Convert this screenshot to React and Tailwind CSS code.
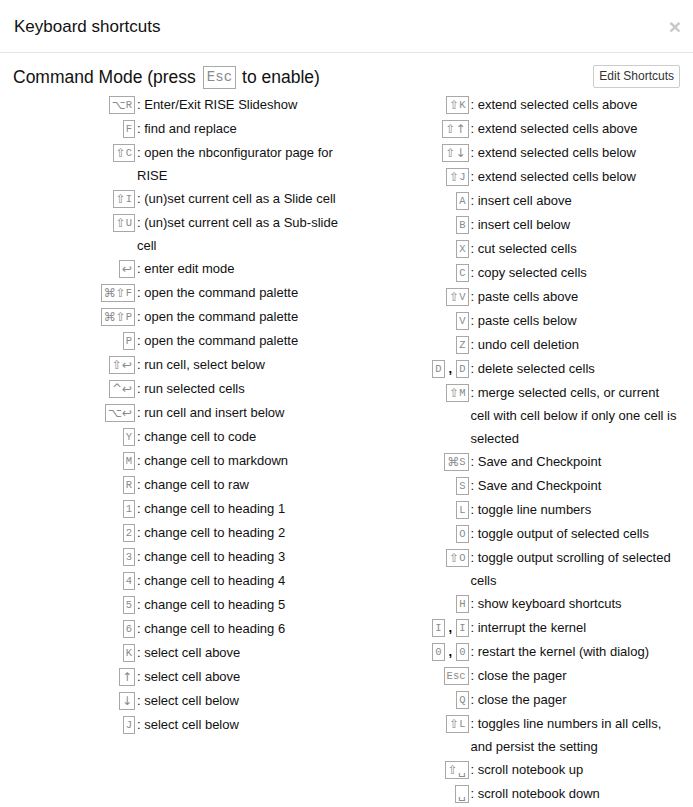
const left = [
  { keys: ['⌥R'], text: ['Enter/Exit RISE Slideshow'] },
  { keys: ['F'], text: ['find and replace'] },
  { keys: ['⇧C'], text: ['open the nbconfigurator page for', 'RISE'] },
  { keys: ['⇧I'], text: ['(un)set current cell as a Slide cell'] },
  { keys: ['⇧U'], text: ['(un)set current cell as a Sub-slide', 'cell'] },
  { keys: ['↩'], text: ['enter edit mode'] },
  { keys: ['⌘⇧F'], text: ['open the command palette'] },
  { keys: ['⌘⇧P'], text: ['open the command palette'] },
  { keys: ['P'], text: ['open the command palette'] },
  { keys: ['⇧↩'], text: ['run cell, select below'] },
  { keys: ['^↩'], text: ['run selected cells'] },
  { keys: ['⌥↩'], text: ['run cell and insert below'] },
  { keys: ['Y'], text: ['change cell to code'] },
  { keys: ['M'], text: ['change cell to markdown'] },
  { keys: ['R'], text: ['change cell to raw'] },
  { keys: ['1'], text: ['change cell to heading 1'] },
  { keys: ['2'], text: ['change cell to heading 2'] },
  { keys: ['3'], text: ['change cell to heading 3'] },
  { keys: ['4'], text: ['change cell to heading 4'] },
  { keys: ['5'], text: ['change cell to heading 5'] },
  { keys: ['6'], text: ['change cell to heading 6'] },
  { keys: ['K'], text: ['select cell above'] },
  { keys: ['↑'], text: ['select cell above'] },
  { keys: ['↓'], text: ['select cell below'] },
  { keys: ['J'], text: ['select cell below'] },
];

const right = [
  { keys: ['⇧K'], text: ['extend selected cells above'] },
  { keys: ['⇧↑'], text: ['extend selected cells above'] },
  { keys: ['⇧↓'], text: ['extend selected cells below'] },
  { keys: ['⇧J'], text: ['extend selected cells below'] },
  { keys: ['A'], text: ['insert cell above'] },
  { keys: ['B'], text: ['insert cell below'] },
  { keys: ['X'], text: ['cut selected cells'] },
  { keys: ['C'], text: ['copy selected cells'] },
  { keys: ['⇧V'], text: ['paste cells above'] },
  { keys: ['V'], text: ['paste cells below'] },
  { keys: ['Z'], text: ['undo cell deletion'] },
  { keys: ['D', 'D'], text: ['delete selected cells'] },
  { keys: ['⇧M'], text: ['merge selected cells, or current', 'cell with cell below if only one cell is', 'selected'] },
  { keys: ['⌘S'], text: ['Save and Checkpoint'] },
  { keys: ['S'], text: ['Save and Checkpoint'] },
  { keys: ['L'], text: ['toggle line numbers'] },
  { keys: ['O'], text: ['toggle output of selected cells'] },
  { keys: ['⇧O'], text: ['toggle output scrolling of selected', 'cells'] },
  { keys: ['H'], text: ['show keyboard shortcuts'] },
  { keys: ['I', 'I'], text: ['interrupt the kernel'] },
  { keys: ['0', '0'], text: ['restart the kernel (with dialog)'] },
  { keys: ['Esc'], text: ['close the pager'] },
  { keys: ['Q'], text: ['close the pager'] },
  { keys: ['⇧L'], text: ['toggles line numbers in all cells,', 'and persist the setting'] },
  { keys: ['⇧␣'], text: ['scroll notebook up'] },
  { keys: ['␣'], text: ['scroll notebook down'] },
];

const symbols = '⌥⇧⌘↩^↑↓␣';

// split a key label into mono letters and symbol glyphs
const parts = (label) => {
  if (label === 'Esc') return [{ t: label, sym: false }];
  return label.split('').map((c) => ({ t: c, sym: symbols.includes(c) }));
};

const Kbd = ({ label }) => (
  <kbd className="inline-flex h-[18px] items-center border border-[#a8a8a8] bg-white px-[2px] text-[#8a8a8a]">
    {parts(label).map((p, i) =>
      p.sym ? (
        <span
          key={i}
          className="text-[12px] leading-none"
          style={{ fontFamily: '"DejaVu Sans", sans-serif' }}
        >
          {p.t}
        </span>
      ) : (
        <span
          key={i}
          className="text-[10.5px] leading-none"
          style={{ fontFamily: '"Liberation Mono", "DejaVu Sans Mono", monospace' }}
        >
          {p.t}
        </span>
      )
    )}
  </kbd>
);

const Row = ({ item }) => (
  <div className="flex min-h-[24px] items-start">
    <span className="flex h-[24px] w-[120px] shrink-0 items-center justify-end">
      {item.keys.map((k, i) => (
        <span key={i} className="flex items-center">
          {i > 0 && <span className="mx-[4px] text-[13px] font-bold text-black">,</span>}
          <Kbd label={k} />
        </span>
      ))}
    </span>
    <span className="pl-[2px] text-[13px] leading-[23px] whitespace-nowrap text-[#111]">
      {item.text.map((line, i) => (
        <span key={i} className="block">
          {i === 0 ? ': ' + line : line}
        </span>
      ))}
    </span>
  </div>
);

const App = () => {
  return (
    <div
      className="h-[807px] w-[693px] overflow-hidden bg-white text-[#111]"
      style={{ fontFamily: '"Liberation Sans", Arial, sans-serif' }}
    >
      <div className="flex h-[53px] items-center justify-between border-b border-[#e5e5e5] pl-[14px] pr-[12px] pt-[1px]">
        <h4 className="text-[17px] text-[#111]">Keyboard shortcuts</h4>
        <button className="text-[21px] font-bold leading-none text-[#c8c8c8]">×</button>
      </div>

      <div className="px-[13px] pt-[12px]">
        <div className="mb-[4px] flex h-[24px] items-center justify-between">
          <h4 className="flex items-center text-[17.5px] text-[#111]">
            Command Mode (press
            <kbd
              className="ml-[7px] mr-[6px] inline-block h-[23px] border border-[#a8a8a8] px-[3px] text-[14px] leading-[21px] text-[#8a8a8a]"
              style={{ fontFamily: '"Liberation Mono", monospace' }}
            >
              Esc
            </kbd>
            to enable)
          </h4>
          <button className="-mt-[2px] h-[23px] rounded-[2px] border border-[#ccc] bg-white px-[5px] text-[12px] text-[#333]">
            Edit Shortcuts
          </button>
        </div>

        <div className="grid grid-cols-2">
          <div className="pl-[2px]">
            {left.map((item, i) => (
              <Row key={i} item={item} />
            ))}
          </div>
          <div className="pl-[2px]">
            {right.map((item, i) => (
              <Row key={i} item={item} />
            ))}
          </div>
        </div>
      </div>
    </div>
  );
};

export default App;
